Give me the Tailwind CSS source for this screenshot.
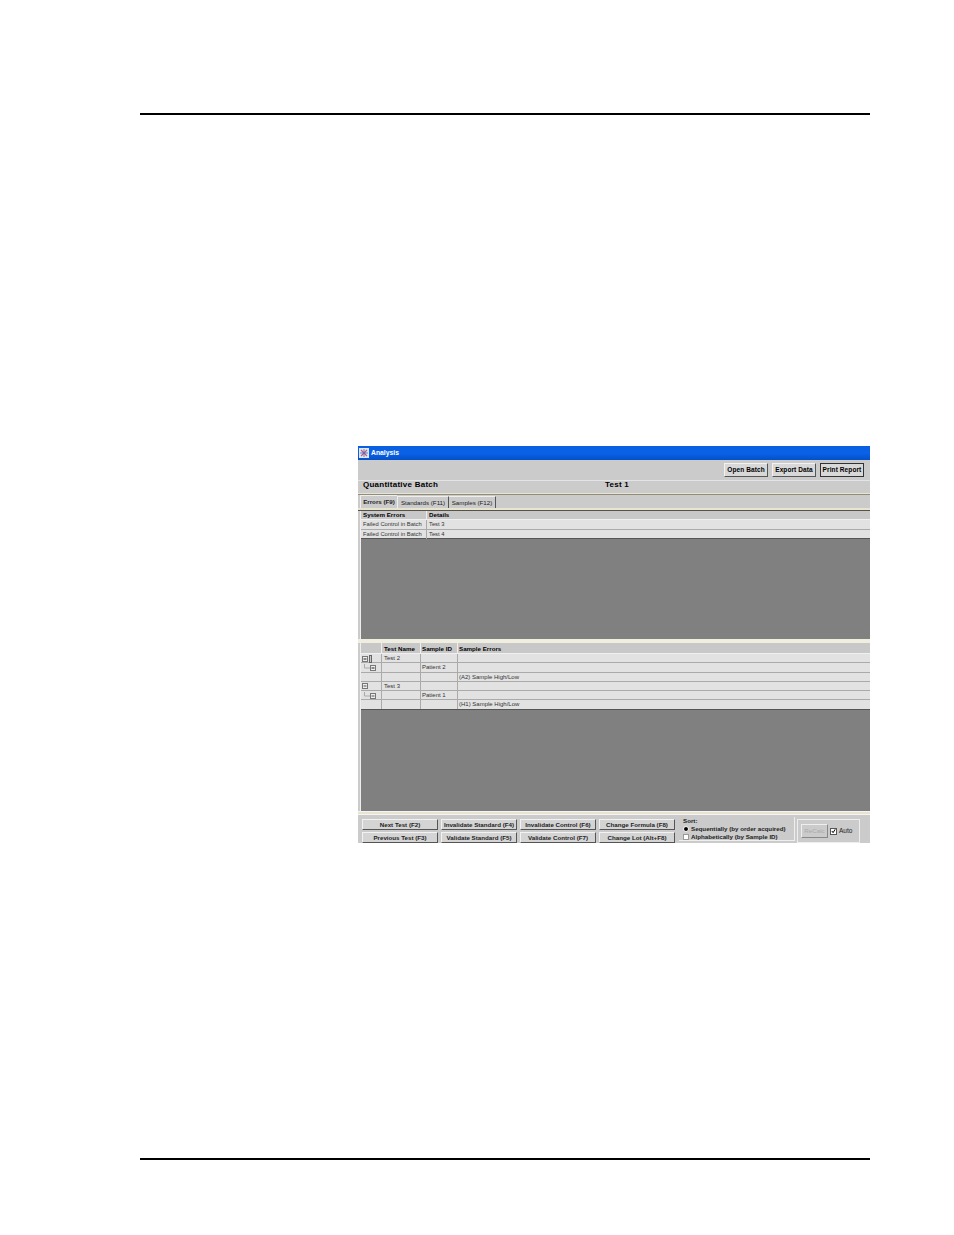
<!DOCTYPE html>
<html lang="en">
<head>
    <meta charset="UTF-8">
    <title>Analysis</title>
    <script src="https://cdn.jsdelivr.net/npm/@tailwindcss/browser@4"></script>
</head>
<body class="bg-white font-['Liberation_Sans',sans-serif] text-black">
<div class="w-[954px] h-[1235px] flex flex-col pl-[140px] pr-[84px] pt-[113px]">
    <div class="h-[2px] bg-black shrink-0"></div>

    <div class="mt-[331px] ml-[218px] h-[397px] shrink-0 flex flex-col bg-[#cbcbcb] overflow-hidden">
        <!-- title bar -->
        <div class="h-[14px] shrink-0 flex items-center gap-[2px] pl-[1px] bg-gradient-to-b from-[#0a5fe0] via-[#0a62e8] to-[#0450c8]">
            <svg width="10" height="10" viewBox="0 0 10 10"><rect width="10" height="10" fill="#dfe6f5"/><path d="M2 2l6 6M8 2L2 8" stroke="#c85a6a" stroke-width="1.2"/><path d="M1 5h8M5 1v8" stroke="#4a68c0" stroke-width="0.8"/></svg>
            <span class="text-[6.8px] font-bold text-white pt-[1px]">Analysis</span>
        </div>

        <!-- toolbar -->
        <div class="h-[20px] shrink-0 flex items-center justify-end gap-[4px] pr-[6px]">
            <div class="w-[44px] h-[14px] flex items-center justify-center bg-[#d8d8d8] border border-[#f2f2f2] border-b-[#555] border-r-[#555] text-[6.5px] font-bold tracking-[0.1px]">Open Batch</div>
            <div class="w-[44px] h-[14px] flex items-center justify-center bg-[#d8d8d8] border border-[#f2f2f2] border-b-[#555] border-r-[#555] text-[6.5px] font-bold tracking-[0.1px]">Export Data</div>
            <div class="w-[44px] h-[14px] flex items-center justify-center bg-[#d8d8d8] border border-[#333] text-[6.5px] font-bold tracking-[0.1px]">Print Report</div>
        </div>

        <!-- heading -->
        <div class="h-[13px] shrink-0 flex items-start pl-[5px] border-t border-[#e4e4e4] text-[8px] leading-[7px] font-bold tracking-[0.25px]">
            <span class="w-[242px]">Quantitative Batch</span>
            <span>Test 1</span>
        </div>
        <div class="h-[2px] shrink-0 bg-[#e8e4d0] border-b border-[#8f8c78]"></div>

        <!-- tabs -->
        <div class="h-[13px] shrink-0 flex items-end pl-[2px] text-[6.2px] text-[#222]">
            <div class="h-[13px] w-[37px] flex items-center justify-center font-bold bg-[#cbcbcb] border-t border-l border-[#eee]">Errors (F9)</div>
            <div class="h-[12px] w-[52px] flex items-center justify-center border-t border-l border-r border-[#eee] border-r-[#555]">Standards (F11)</div>
            <div class="h-[12px] w-[47px] flex items-center justify-center border-t border-r border-[#eee] border-r-[#555]">Samples (F12)</div>
        </div>
        <div class="h-[3px] shrink-0 bg-[#e8e4d0] border-b border-[#55534a]"></div>

        <!-- system errors -->
        <div class="ml-[2px] h-[128px] shrink-0 flex flex-col bg-[#808080] border-l border-[#eee]">
            <div class="grid grid-cols-[66px_1fr] h-[9px] bg-[#c8c8c8] text-[6.2px] font-bold leading-[8px] border-b border-[#f0f0f0]">
                <div class="pl-[2px] border-r border-[#eee]">System Errors</div>
                <div class="pl-[2px]">Details</div>
            </div>
            <div class="grid grid-cols-[66px_1fr] h-[9.5px] bg-[#e2e2e2] text-[5.8px] text-[#333] leading-[9px] border-b border-[#aaa]">
                <div class="pl-[2px] border-r border-[#aaa]">Failed Control in Batch</div>
                <div class="pl-[2px]">Test 3</div>
            </div>
            <div class="grid grid-cols-[66px_1fr] h-[9.5px] bg-[#e2e2e2] text-[5.8px] text-[#333] leading-[9px] border-b border-[#555]">
                <div class="pl-[2px] border-r border-[#aaa]">Failed Control in Batch</div>
                <div class="pl-[2px]">Test 4</div>
            </div>
        </div>
        <div class="h-[4px] shrink-0 bg-[#f0eee0]"></div>

        <!-- sample errors -->
        <div class="ml-[2px] h-[168px] shrink-0 flex flex-col bg-[#808080] border-l border-[#eee] text-[6px] text-[#333]">
            <div class="grid grid-cols-[21px_39px_37px_1fr] h-[11px] bg-[#c8c8c8] font-bold text-black text-[6.2px] leading-[11px] border-b border-[#f0f0f0]">
                <div class="border-r border-[#eee]"></div>
                <div class="pl-[2px] border-r border-[#eee]">Test Name</div>
                <div class="pl-[1px] border-r border-[#eee]">Sample ID</div>
                <div class="pl-[1px]">Sample Errors</div>
            </div>
            <div class="grid grid-cols-[21px_39px_37px_1fr] h-[9.3px] bg-[#e2e2e2] leading-[9px] border-b border-[#aaa]">
                <div class="flex items-center gap-[1px] pl-[1px] border-r border-[#aaa]">
                    <svg width="6" height="6" viewBox="0 0 6 6"><rect x="0.5" y="0.5" width="5" height="5" fill="#eee" stroke="#777"/><path d="M1.5 3h3" stroke="#222"/></svg>
                    <span class="w-[3px] h-[8px] border border-[#666] bg-[#c8c8c8]"></span>
                </div>
                <div class="pl-[2px] border-r border-[#aaa]">Test 2</div>
                <div class="border-r border-[#aaa]"></div>
                <div></div>
            </div>
            <div class="grid grid-cols-[21px_39px_37px_1fr] h-[9.3px] bg-[#e2e2e2] leading-[9px] border-b border-[#aaa]">
                <div class="flex items-center pl-[3px] border-r border-[#aaa]">
                    <svg width="13" height="8" viewBox="0 0 13 8"><path d="M0.5 0v4h6" fill="none" stroke="#aaa"/><rect x="6.5" y="1.5" width="5" height="5" fill="#eee" stroke="#777"/><path d="M7.5 4h3" stroke="#222"/></svg>
                </div>
                <div class="border-r border-[#aaa]"></div>
                <div class="pl-[1px] border-r border-[#aaa]">Patient 2</div>
                <div></div>
            </div>
            <div class="grid grid-cols-[21px_39px_37px_1fr] h-[9.3px] bg-[#e2e2e2] leading-[9px] border-b border-[#aaa]">
                <div class="border-r border-[#aaa]"></div>
                <div class="border-r border-[#aaa]"></div>
                <div class="border-r border-[#aaa]"></div>
                <div class="pl-[1px]">(A2) Sample High/Low</div>
            </div>
            <div class="grid grid-cols-[21px_39px_37px_1fr] h-[9.3px] bg-[#e2e2e2] leading-[9px] border-b border-[#aaa]">
                <div class="flex items-center pl-[1px] border-r border-[#aaa]">
                    <svg width="6" height="6" viewBox="0 0 6 6"><rect x="0.5" y="0.5" width="5" height="5" fill="#eee" stroke="#777"/><path d="M1.5 3h3" stroke="#555"/></svg>
                </div>
                <div class="pl-[2px] border-r border-[#aaa]">Test 3</div>
                <div class="border-r border-[#aaa]"></div>
                <div></div>
            </div>
            <div class="grid grid-cols-[21px_39px_37px_1fr] h-[9.3px] bg-[#e2e2e2] leading-[9px] border-b border-[#aaa]">
                <div class="flex items-center pl-[3px] border-r border-[#aaa]">
                    <svg width="13" height="8" viewBox="0 0 13 8"><path d="M0.5 0v4h6" fill="none" stroke="#aaa"/><rect x="6.5" y="1.5" width="5" height="5" fill="#eee" stroke="#777"/><path d="M7.5 4h3" stroke="#555"/></svg>
                </div>
                <div class="border-r border-[#aaa]"></div>
                <div class="pl-[1px] border-r border-[#aaa]">Patient 1</div>
                <div></div>
            </div>
            <div class="grid grid-cols-[21px_39px_37px_1fr] h-[9.3px] bg-[#e2e2e2] leading-[9px] border-b border-[#555]">
                <div class="border-r border-[#aaa]"></div>
                <div class="border-r border-[#aaa]"></div>
                <div class="border-r border-[#aaa]"></div>
                <div class="pl-[1px]">(H1) Sample High/Low</div>
            </div>
        </div>
        <div class="h-[4px] shrink-0 bg-[#e8e4d0] border-y border-[#f4f4f4]"></div>

        <!-- bottom buttons -->
        <div class="flex-1 flex pl-[4px] pt-[4px] text-[6.2px] font-bold text-[#222]">
            <div class="grid grid-cols-[76px_76px_76px_76px] grid-rows-[11px_11px] gap-x-[3px] gap-y-[2px]">
                <div class="flex items-center justify-center bg-[#d4d4d4] border border-[#f2f2f2] border-b-[#555] border-r-[#555]">Next Test (F2)</div>
                <div class="flex items-center justify-center bg-[#d4d4d4] border border-[#f2f2f2] border-b-[#555] border-r-[#555]">Invalidate Standard (F4)</div>
                <div class="flex items-center justify-center bg-[#d4d4d4] border border-[#f2f2f2] border-b-[#555] border-r-[#555]">Invalidate Control (F6)</div>
                <div class="flex items-center justify-center bg-[#d4d4d4] border border-[#f2f2f2] border-b-[#555] border-r-[#555]">Change Formula (F8)</div>
                <div class="flex items-center justify-center bg-[#d4d4d4] border border-[#f2f2f2] border-b-[#555] border-r-[#555]">Previous Test (F3)</div>
                <div class="flex items-center justify-center bg-[#d4d4d4] border border-[#f2f2f2] border-b-[#555] border-r-[#555]">Validate Standard (F5)</div>
                <div class="flex items-center justify-center bg-[#d4d4d4] border border-[#f2f2f2] border-b-[#555] border-r-[#555]">Validate Control (F7)</div>
                <div class="flex items-center justify-center bg-[#d4d4d4] border border-[#f2f2f2] border-b-[#555] border-r-[#555]">Change Lot (Alt+F8)</div>
            </div>
            <div class="ml-[4px] w-[116px] h-[24px] pl-[4px] border-r border-b border-[#eee] flex flex-col text-[6.2px] -mt-[2px]">
                <span class="h-[8px] leading-[8px]">Sort:</span>
                <div class="flex items-center gap-[2px] h-[8px]"><span class="w-[6px] h-[6px] rounded-full bg-black border-[1.5px] border-white"></span>Sequentially (by order acquired)</div>
                <div class="flex items-center gap-[2px] h-[8px]"><span class="w-[6px] h-[6px] bg-white border border-[#999]"></span>Alphabetically (by Sample ID)</div>
            </div>
            <div class="ml-[2px] w-[63px] h-[24px] border border-[#eee] flex items-center pl-[3px] gap-[2px] font-normal">
                <div class="w-[27px] h-[14px] flex items-center justify-center border border-[#eee] border-b-[#888] border-r-[#888] text-[#aaa]">ReCalc</div>
                <div class="w-[7px] h-[7px] bg-white border border-[#555] flex items-center justify-center">
                    <svg width="6" height="6" viewBox="0 0 6 6"><path d="M1 3l1.5 2L5 1" fill="none" stroke="#000" stroke-width="1.2"/></svg>
                </div>
                <span class="text-[6.5px]">Auto</span>
            </div>
        </div>
    </div>

    <div class="mt-[315px] h-[2px] bg-black shrink-0"></div>
</div>
</body>
</html>
